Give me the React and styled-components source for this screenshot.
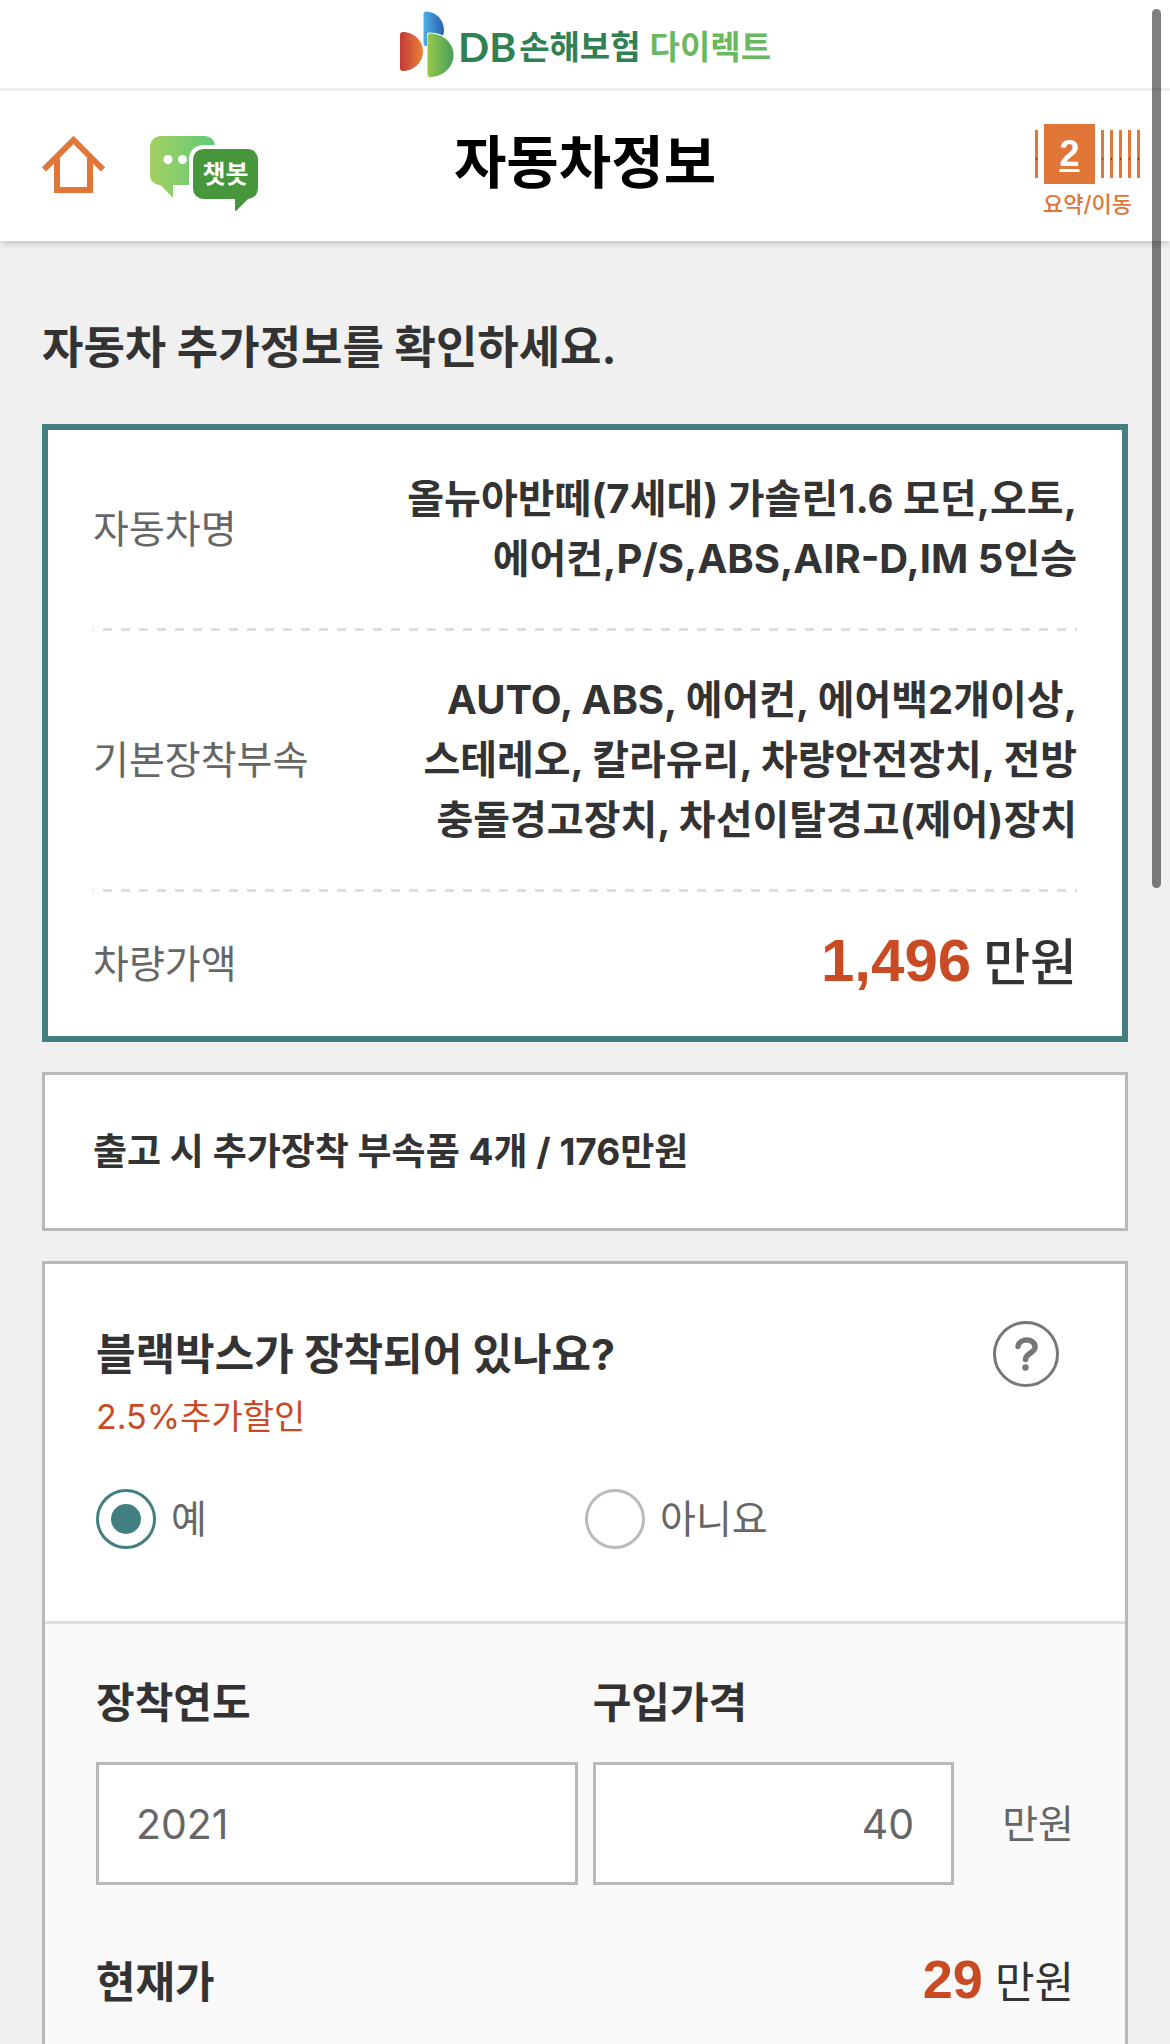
import { useState } from "react";
import styled, { createGlobalStyle } from "styled-components";

const basicInfo = [
  {
    label: "자동차명",
    lines: ["올뉴아반떼(7세대) 가솔린1.6 모던,오토,", "에어컨,P/S,ABS,AIR-D,IM 5인승"],
  },
  {
    label: "기본장착부속",
    lines: [
      "AUTO, ABS, 에어컨, 에어백2개이상,",
      "스테레오, 칼라유리, 차량안전장치, 전방",
      "충돌경고장치, 차선이탈경고(제어)장치",
    ],
  },
];

const Logo = () => (
  <LogoLink href="#main">
    <svg width="56" height="68" viewBox="18 10 56 68" aria-hidden="true">
      <defs>
        <linearGradient id="logoRed">
          <stop offset="0" stopColor="#c23a35" />
          <stop offset="1" stopColor="#e8823a" />
        </linearGradient>
        <linearGradient id="logoBlue">
          <stop offset="0" stopColor="#4fb0e3" />
          <stop offset="1" stopColor="#2a5fae" />
        </linearGradient>
        <linearGradient id="logoGreen">
          <stop offset="0" stopColor="#98c94b" />
          <stop offset="1" stopColor="#46a05a" />
        </linearGradient>
      </defs>
      <path d="M19 35q0-3 3-3c11 0 20 9 20 19.500S33 71 22 71q-3 0-3-3z" fill="url(#logoRed)" />
      <path d="M42.500 14q0-2.500 2.500-2.500C55 11.500 63 20 63 30q0 3-1 5.500-6-3-14-3-2 0-2 2V46h-1q-2.500 0-2.500-3z" fill="url(#logoBlue)" />
      <path d="M46.500 36q0-2.500 2.500-2.500C62 33.500 72.500 43 72.500 55S62 77 49 77q-2.500 0-2.500-2.500z" fill="url(#logoGreen)" />
    </svg>
    <LogoText>
      <LogoDb>DB</LogoDb>
      <span>손해보험</span>
      <LogoSub>다이렉트</LogoSub>
    </LogoText>
  </LogoLink>
);

const HomeIcon = () => (
  <svg width="63" height="57" viewBox="0 0 63 57" fill="none" stroke="#e17639" aria-hidden="true">
    <path d="M2 33.500 31.500 4 61 33.500" strokeWidth="6" />
    <path d="M15 22v32h33V22" strokeWidth="6" />
  </svg>
);

const ChatIcon = () => (
  <svg width="108" height="75" viewBox="0 0 108 75" aria-hidden="true">
    <defs>
      <linearGradient id="bubble">
        <stop offset="0" stopColor="#a5cf62" />
        <stop offset="1" stopColor="#5fcb78" />
      </linearGradient>
    </defs>
    <path d="M10 0h45q9 1 10 9H53q-13 1-14 14v26H23v13L11 49.500Q0 48 0 39V10Q1 1 10 0z" fill="url(#bubble)" />
    <circle cx="18" cy="23.500" r="4.500" fill="#fff" />
    <circle cx="32.500" cy="23.500" r="4.500" fill="#fff" />
    <path d="M53 13h45q9 1 10 10v30q-1 9-10 10L86 75H85V63H53q-9-1-10-10V23q1-9 10-10z" fill="#46963c" />
  </svg>
);

// gauge of the remaining steps, the current one is the filled box
const StepIcon = () => (
  <svg width="105" height="60" viewBox="0 0 105 60" aria-hidden="true">
    <rect x="9" width="51" height="60" fill="#e17639" />
    {[0, 66, 75, 84, 93, 102].map((x) => (
      <g key={x}>
        <rect x={x} y="6" width="3" height="48" fill="#e17639" />
        <rect x={x + 1} y="34" width="1" height="2" fill="#7c3010" />
      </g>
    ))}
  </svg>
);

const HelpIcon = () => (
  <svg width="66" height="66" viewBox="0 0 66 66" fill="none" stroke="#777" aria-hidden="true">
    <circle cx="33" cy="33" r="31.500" strokeWidth="3" />
    <path d="M25 25.500c1-9 18-8.500 17 1-.5 5.500-9.500 6-9.500 12" strokeWidth="5.500" strokeLinecap="round" />
    <circle cx="32.500" cy="46.500" r="3.200" fill="#777" stroke="none" />
  </svg>
);

const App = () => {
  const [blackbox, setBlackbox] = useState("yes");
  const [year, setYear] = useState("2021");
  const [price, setPrice] = useState("40");

  return (
    <Page>
      <GlobalStyle />
      <Brand>
        <Logo />
      </Brand>
      <Header>
        <HeaderLeft>
          <IconButton type="button" aria-label="홈">
            <HomeIcon />
          </IconButton>
          <IconButton type="button">
            <ChatIcon />
            <ChatText>챗봇</ChatText>
          </IconButton>
        </HeaderLeft>
        <Title>자동차정보</Title>
        <StepButton type="button">
          <StepIcon />
          <StepNumber>2</StepNumber>
          <StepText>요약/이동</StepText>
        </StepButton>
      </Header>
      <Main id="main">
        <Heading>자동차 추가정보를 확인하세요.</Heading>
        <InfoCard>
          {basicInfo.map(({ label, lines }) => (
            <InfoRow key={label}>
              <InfoLabel>{label}</InfoLabel>
              <InfoValue>
                {lines.map((line) => (
                  <span key={line}>{line}</span>
                ))}
              </InfoValue>
            </InfoRow>
          ))}
          <InfoRow>
            <InfoLabel>차량가액</InfoLabel>
            <Price as="dd">
              <PriceNumber $size={60}>1,496</PriceNumber>
              <PriceUnit>만원</PriceUnit>
            </Price>
          </InfoRow>
        </InfoCard>
        <PartsCard>출고 시 추가장착 부속품 4개 / 176만원</PartsCard>
        <QuestionCard>
          <Question>
            <QuestionTop>
              <SubTitle id="blackbox">블랙박스가 장착되어 있나요?</SubTitle>
              <IconButton type="button" aria-label="도움말">
                <HelpIcon />
              </IconButton>
            </QuestionTop>
            <Discount>2.5%추가할인</Discount>
            <Options role="radiogroup" aria-labelledby="blackbox">
              <Option>
                <Radio
                  type="radio"
                  name="blackbox"
                  checked={blackbox === "yes"}
                  onChange={() => setBlackbox("yes")}
                />
                예
              </Option>
              <Option>
                <Radio
                  type="radio"
                  name="blackbox"
                  checked={blackbox === "no"}
                  onChange={() => setBlackbox("no")}
                />
                아니요
              </Option>
            </Options>
          </Question>
          <Detail>
            <Fields>
              <Field>
                <FieldLabel htmlFor="year">장착연도</FieldLabel>
                <Input id="year" value={year} onChange={(e) => setYear(e.target.value)} />
              </Field>
              <Field>
                <FieldLabel htmlFor="price">구입가격</FieldLabel>
                <Input
                  id="price"
                  $align="right"
                  value={price}
                  onChange={(e) => setPrice(e.target.value)}
                />
              </Field>
              <Unit>만원</Unit>
            </Fields>
            <Current>
              <SubTitle as="h3">현재가</SubTitle>
              <Price>
                <PriceNumber $size={54}>29</PriceNumber>
                <CurrentUnit>만원</CurrentUnit>
              </Price>
            </Current>
          </Detail>
        </QuestionCard>
      </Main>
      <ScrollThumb />
    </Page>
  );
};

const GlobalStyle = createGlobalStyle`
  * {
    box-sizing: border-box;
    margin: 0;
    padding: 0;
  }

  html {
    scrollbar-width: none;
  }

  body {
    background: #f0f0f0;
    color: #333;
    font-family: Inter, "Noto Sans CJK KR", sans-serif;
    font-size: 39px;
    line-height: 60px;
  }

  button,
  input {
    font: inherit;
    color: inherit;
  }
`;

const Page = styled.div`
  display: flex;
  flex-direction: column;
  min-height: 100vh;
`;

const Brand = styled.div`
  display: flex;
  justify-content: center;
  background: #fff;
  border-bottom: 3px solid #eee;
`;

const LogoLink = styled.a`
  display: flex;
  align-items: center;
  height: 88px;
  color: #2f8052;
  font-size: 33px;
  font-weight: 700;
  text-decoration: none;
`;

const LogoText = styled.span`
  display: flex;
  align-items: center;
  gap: 3px;
  padding: 6px 0 0 3px;
`;

const LogoDb = styled.span`
  font-family: Lato, sans-serif;
  font-size: 41px;
`;

const LogoSub = styled.span`
  margin-left: 6px;
  color: #6ab85f;
`;

const Header = styled.header`
  display: grid;
  grid-template-columns: 1fr auto 1fr;
  align-items: start;
  padding: 33px 30px 17px;
  background: #fff;
  box-shadow: 0 5px 6px -2px rgba(0, 0, 0, 0.18);
`;

const HeaderLeft = styled.div`
  display: flex;
  align-items: flex-start;
  gap: 45px;
  padding: 12px 0 0 12px;
`;

const IconButton = styled.button`
  position: relative;
  display: flex;
  background: none;
  border: none;
  cursor: pointer;
`;

const ChatText = styled.span`
  position: absolute;
  top: 13px;
  right: 0;
  width: 65px;
  color: #fff;
  font-size: 25px;
  font-weight: 700;
  line-height: 50px;
  text-align: center;
`;

const Title = styled.h1`
  color: #000;
  font-size: 57px;
  line-height: 78px;
`;

const StepButton = styled.button`
  position: relative;
  display: flex;
  flex-direction: column;
  align-items: center;
  justify-self: end;
  color: #e17639;
  background: none;
  border: none;
  cursor: pointer;
`;

const StepNumber = styled.span`
  position: absolute;
  top: 0;
  left: 9px;
  width: 51px;
  color: #fff;
  font-family: "Liberation Sans", sans-serif;
  font-size: 36px;
  font-weight: 700;
  line-height: 60px;
  text-decoration: underline;
  text-decoration-thickness: 3px;
  text-underline-offset: 3px;
`;

const StepText = styled.span`
  font-size: 22px;
  font-weight: 500;
  line-height: 40px;
`;

const Main = styled.main`
  display: flex;
  flex: 1;
  flex-direction: column;
  padding: 77px 42px 0;
`;

const Heading = styled.h2`
  margin-bottom: 46px;
  font-size: 45px;
`;

const InfoCard = styled.dl`
  padding: 0 45px;
  background: #fff;
  border: 6px solid #437f80;
`;

const InfoRow = styled.div`
  display: flex;
  align-items: center;
  justify-content: space-between;
  padding: 39px 0;

  &:not(:last-child) {
    padding-bottom: 42px;
    background: linear-gradient(90deg, #ddd 50%, transparent 50%) 10px 100% / 18px 3px repeat-x;
  }
`;

const InfoLabel = styled.dt`
  color: #666;
`;

const InfoValue = styled.dd`
  display: flex;
  flex-direction: column;
  font-size: 40px;
  font-weight: 700;
  text-align: right;
`;

const Price = styled.p`
  display: flex;
  align-items: baseline;
  gap: 12px;
  height: 66px;
`;

const PriceNumber = styled.strong`
  color: #c84b24;
  font-family: "Liberation Sans", sans-serif;
  font-size: ${({ $size }) => $size}px;
`;

const PriceUnit = styled.span`
  font-size: 51px;
  font-weight: 500;
`;

const CurrentUnit = styled.span`
  font-size: 43px;
`;

const PartsCard = styled.section`
  margin: 30px 0;
  padding: 48px;
  background: #fff;
  border: 3px solid #b9b9b9;
  font-size: 37px;
  font-weight: 700;
  line-height: 57px;
`;

const QuestionCard = styled.section`
  display: flex;
  flex: 1;
  flex-direction: column;
  background: #fff;
  border: 3px solid #b9b9b9;
  border-bottom: none;
`;

const Question = styled.div`
  padding: 57px 51px 72px;
`;

const QuestionTop = styled.div`
  display: flex;
  align-items: center;
  justify-content: space-between;
  padding-right: 15px;
`;

const SubTitle = styled.h2`
  font-size: 43px;
`;

const Discount = styled.p`
  margin: 6px 0 48px;
  color: #c84b24;
  font-size: 34px;
  line-height: 48px;
`;

const Options = styled.div`
  display: grid;
  grid-template-columns: 1fr 1fr;
`;

const Option = styled.label`
  display: flex;
  align-items: center;
  gap: 15px;
  color: #666;
  cursor: pointer;
`;

const Radio = styled.input`
  appearance: none;
  width: 60px;
  height: 60px;
  border: 3px solid #bbb;
  border-radius: 50%;

  &:checked {
    padding: 12px;
    background: #437f80 content-box;
    border-color: #437f80;
  }
`;

const Detail = styled.div`
  flex: 1;
  padding: 49px 51px 24px;
  background: #f9f9f9;
  border-top: 3px solid #ddd;
`;

const Fields = styled.div`
  display: grid;
  grid-template-columns: 4fr 3fr 105px;
  align-items: end;
  gap: 15px;
`;

const Field = styled.div`
  display: flex;
  flex-direction: column;
`;

const FieldLabel = styled.label`
  margin-bottom: 29px;
  font-size: 42px;
  font-weight: 700;
`;

const Input = styled.input`
  width: 100%;
  height: 123px;
  padding: 0 37px;
  color: #666;
  background: #fff;
  border: 3px solid #b9b9b9;
  border-radius: 0;
  font-size: 41px;
  text-align: ${({ $align }) => $align || "left"};
`;

const Unit = styled.span`
  color: #666;
  line-height: 123px;
  text-align: right;
`;

const Current = styled.div`
  display: flex;
  align-items: center;
  justify-content: space-between;
  margin-top: 64px;
`;

// overlay scroll bar of the phone browser
const ScrollThumb = styled.div`
  position: fixed;
  top: 9px;
  right: 9px;
  width: 9px;
  height: 43vh;
  background: rgba(0, 0, 0, 0.5);
  border-radius: 5px;
`;

export default App;
